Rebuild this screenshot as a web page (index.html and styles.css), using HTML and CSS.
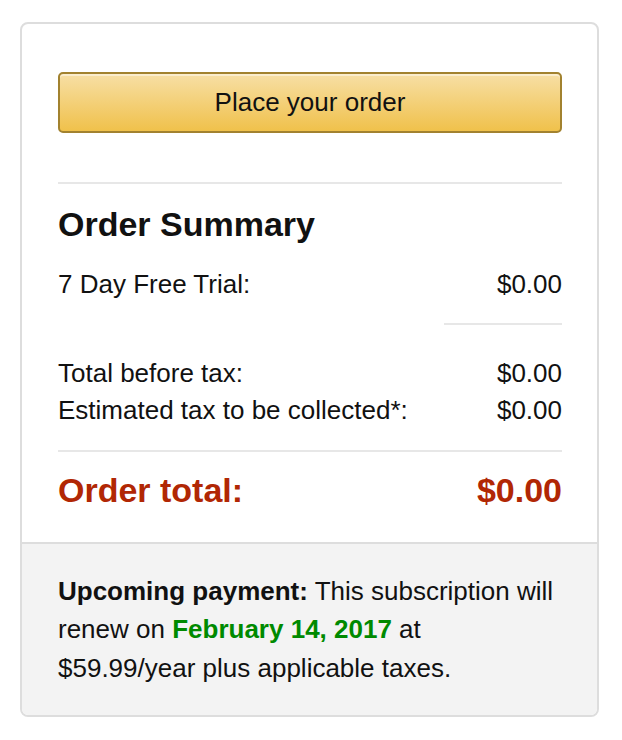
FILE: index.html
```html
<!DOCTYPE html>
<html lang="en">
<head>
    <meta charset="UTF-8">
    <meta name="viewport" content="width=device-width, initial-scale=1.0">
    <title>Place your order</title>
    <link rel="stylesheet" href="styles.css">
</head>
<body>
    <div class="order-box">
        <div class="order-main">
            <button class="place-btn" type="button">Place your order</button>

            <hr class="divider divider-top">

            <h2 class="summary-title">Order Summary</h2>

            <div class="line-item trial-row">
                <span>7 Day Free Trial:</span>
                <span>$0.00</span>
            </div>

            <div class="subtotal-rule"></div>

            <div class="line-item tax-row">
                <span>Total before tax:</span>
                <span>$0.00</span>
            </div>
            <div class="line-item">
                <span>Estimated tax to be collected*:</span>
                <span>$0.00</span>
            </div>

            <hr class="divider divider-total">

            <div class="line-item order-total">
                <span>Order total:</span>
                <span>$0.00</span>
            </div>
        </div>

        <div class="order-note">
            <b>Upcoming payment:</b> This subscription will renew on
            <span class="renew-date">February 14, 2017</span> at
            $59.99/year plus applicable taxes.
        </div>
    </div>
</body>
</html>
```

FILE: styles.css
```css
body {
    margin: 0;
    background: #fff;
    font-family: "Liberation Sans", Arial, sans-serif;
    color: #111;
}

.order-box {
    margin: 22px 23px 0 20px;
    border: 2px solid #ddd;
    border-radius: 8px;
    overflow: hidden;
}

.order-main {
    padding: 48px 35px 32px 36px;
}

.place-btn {
    display: block;
    width: 100%;
    height: 61px;
    padding: 0;
    border: 2px solid #a2822f;
    border-radius: 5px;
    background: linear-gradient(to bottom, #f7dfa5, #f0c14b);
    box-shadow: inset 0 2px 0 rgba(255,255,255,0.45);
    font-family: inherit;
    font-size: 26px;
    color: #111;
    cursor: pointer;
}

.divider {
    border: 0;
    height: 2px;
    background: #e7e7e7;
    margin: 0;
}
.divider-top { margin-top: 49px; }
.divider-total { margin-top: 21px; }

.summary-title {
    margin: 20px 0 0;
    font-size: 34px;
    line-height: 40px;
    font-weight: bold;
}

.line-item {
    display: flex;
    justify-content: space-between;
    font-size: 26px;
    line-height: 37px;
}
.trial-row { margin-top: 22px; }
.tax-row { margin-top: 30px; }

.subtotal-rule {
    width: 118px;
    height: 2px;
    background: #e7e7e7;
    margin: 20px 0 0 auto;
}

.order-total {
    margin-top: 18px;
    font-size: 34px;
    line-height: 40px;
    font-weight: bold;
    color: #b12704;
}

.order-note {
    background: #f3f3f3;
    border-top: 2px solid #ddd;
    padding: 28px 35px 28px 36px;
    font-size: 26px;
    line-height: 38.4px;
}

.renew-date {
    color: #008a00;
    font-weight: bold;
}
```
